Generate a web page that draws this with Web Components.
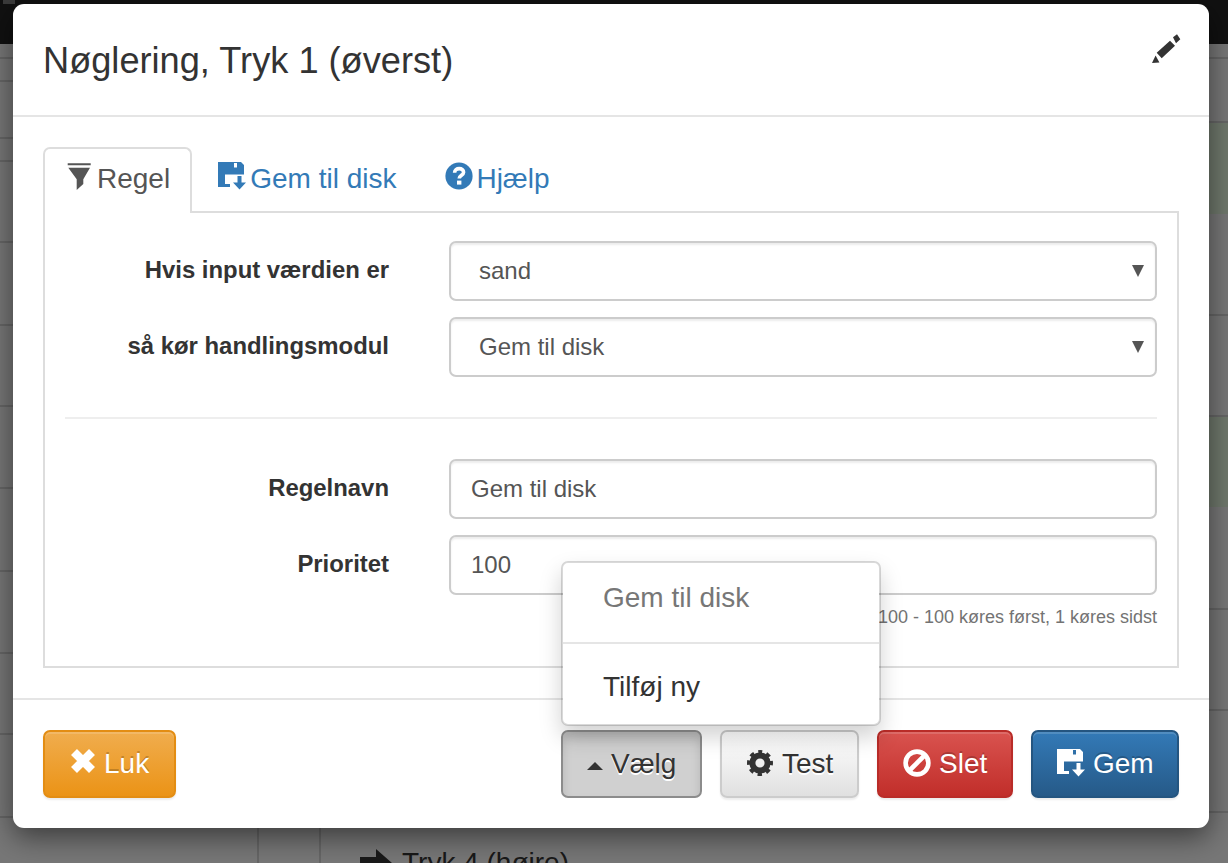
<!DOCTYPE html>
<html lang="da">
<head>
<meta charset="utf-8">
<title>Nøglering</title>
<style>
  html, body { margin: 0; height: 100%; overflow: hidden; }
  body { font-family: "Liberation Sans", Arial, sans-serif; color: #333; background: #eee; }
</style>
</head>
<body>
<page-behind></page-behind>
<rule-modal heading="Nøglering, Tryk 1 (øverst)">
  <ui-tabs slot="tabs"></ui-tabs>
  <rule-field label="Hvis input værdien er" value="sand" kind="select"></rule-field>
  <rule-field label="så kør handlingsmodul" value="Gem til disk" kind="select"></rule-field>
  <hr-line></hr-line>
  <rule-field label="Regelnavn" value="Gem til disk"></rule-field>
  <rule-field label="Prioritet" value="100" help="100 - 100 køres først, 1 køres sidst"></rule-field>
  <ui-btn slot="left" tone="warning" icon="remove" width="133">Luk</ui-btn>
  <pick-menu slot="right"></pick-menu>
  <ui-btn slot="right" tone="default" icon="cog" width="139">Test</ui-btn>
  <ui-btn slot="right" tone="danger" icon="ban" width="136">Slet</ui-btn>
  <ui-btn slot="right" tone="primary" icon="save" width="148">Gem</ui-btn>
</rule-modal>

<script>
const ICONS = {
  filter: `<svg viewBox="0 0 24 30" width="24" height="30"><path d="M.7 2.3h23v2H.7zM1.3 6.7H23L16.3 18.3V23L9.7 29V18.3Z"/></svg>`,
  save: `<svg viewBox="0 0 28 28" width="28" height="28"><path fill-rule="evenodd" d="M0 0H23L26 3V12.5H7V22H12V25H0ZM16 1V5.5H19V1Z"/><path d="M19.5 14H23.5V20.5H28L21.5 27.5L15 20.5H19.5Z"/></svg>`,
  help: `<svg viewBox="0 0 28 28" width="28" height="28"><circle cx="14" cy="14" r="13.6"/><path d="M9.6 10.8C9.6 8 11.8 6.6 14.2 6.6C16.8 6.6 18.6 8.1 18.6 10.3C18.6 13.2 14.2 13.4 14.2 16.6" fill="none" stroke="#fff" stroke-width="3.6"/><rect x="12" y="18.6" width="4.4" height="4" fill="#fff"/></svg>`,
  pencil: `<svg viewBox="0 0 30 30" width="30" height="30"><path d="M1 29L4.6 21.6L8.4 28.6ZM5.7 18.7L19 6.7L24 11.7L10.7 24.3ZM22 3.3L26 .3L29.3 5.3L25 9.3Z"/></svg>`,
  remove: `<svg viewBox="0 0 27 24" width="27" height="24"><path d="M5 3L23 21M23 3L5 21" fill="none" stroke="currentColor" stroke-width="8.4"/></svg>`,
  cog: `<svg viewBox="-1 0 28 26" width="28" height="26"><g fill="none" stroke="currentColor"><circle cx="13" cy="13" r="7.6" stroke-width="6"/><circle cx="13" cy="13" r="11" stroke-width="4" stroke-dasharray="4.32 4.32" stroke-dashoffset="2.16" transform="rotate(-90 13 13)"/></g></svg>`,
  ban: `<svg viewBox="0 0 28 28" width="28" height="28"><g fill="none" stroke="currentColor" stroke-width="4.6"><circle cx="14" cy="14" r="11.4"/><path d="M22 6L6 22"/></g></svg>`,
  caret: `<svg viewBox="0 0 16 8" width="16" height="8"><path d="M8 0L16 8H0Z"/></svg>`,
  arrow: `<svg viewBox="0 0 32 28" width="32" height="28"><path d="M0 8H16V0L32 14L16 28V20H0Z"/></svg>`
};

class UiIcon extends HTMLElement {
  connectedCallback() {
    if (!this.shadowRoot) this.attachShadow({ mode: "open" });
    this.shadowRoot.innerHTML = `
      <style>
        :host { display: inline-flex; align-items: center; justify-content: center; flex: none; }
        svg { display: block; fill: currentColor; overflow: visible; }
      </style>${ICONS[this.getAttribute("name")]}`;
  }
}
customElements.define("ui-icon", UiIcon);

// the page that sits behind the dialog, only its edges show
class PageBehind extends HTMLElement {
  constructor() {
    super();
    this.attachShadow({ mode: "open" });
  }
  row(h, green) {
    return `<div class="row${green ? " ok" : ""}" style="height:${h}px"></div>`;
  }
  connectedCallback() {
    const left = [15, 23, 57, 23, 81, 83, 81, 82, 83, 82, 81, 83].map(h => this.row(h)).join("");
    const right = [[15], [64], [91, 1], [102], [101], [90, 1], [103], [101], [102]].map(r => this.row(r[0], r[1])).join("");
    this.shadowRoot.innerHTML = `
      <style>
        :host { position: absolute; inset: 0; display: flex; flex-direction: column; background: #eee; }
        .nav { height: 44px; background: #222; flex: none; display: flex; }
        .nav i { width: 12px; height: 4px; margin-left: 3px; background: #777; }
        .cols { flex: 1; display: grid; grid-template-columns: 257px 62px 1fr 19px; }
        .col + .col { border-left: 2px solid #ccc; }
        .col:last-child { border-left: 0; }
        .row { border-bottom: 2px solid #ccc; box-sizing: border-box; }
        .ok { background: #dff0d8; border-bottom: 0; }
        .main { display: flex; justify-content: flex-end; flex-direction: column; }
        .tail { display: flex; align-items: center; gap: 10px; padding-left: 39px; margin-bottom: -16px; font-size: 28px; line-height: 32px; color: #333; }
      </style>
      <div class="nav"><i></i></div>
      <div class="cols">
        <div class="col">${left}</div>
        <div class="col"></div>
        <div class="col main"><div class="tail"><ui-icon name="arrow"></ui-icon>Tryk 4 (højre)</div></div>
        <div class="col">${right}</div>
      </div>`;
  }
}
customElements.define("page-behind", PageBehind);

class RuleModal extends HTMLElement {
  constructor() {
    super();
    this.attachShadow({ mode: "open" });
  }
  connectedCallback() {
    this.shadowRoot.innerHTML = `
      <style>
        :host { position: absolute; inset: 0; background: rgba(0,0,0,.5); display: block; }
        .dialog { position: absolute; left: 13px; top: 4px; width: 1196px; height: 824px; background: #fff;
          border-radius: 11px; display: flex; flex-direction: column; box-shadow: 0 9px 28px rgba(0,0,0,.5); color: #333; }
        header { height: 111px; flex: none; box-sizing: content-box; border-bottom: 2px solid #e5e5e5; display: flex; justify-content: space-between; padding: 0 28px 0 30px; }
        h4 { margin: 0; font-size: 36.2px; font-weight: 400; line-height: 114px; }
        header ui-icon { margin-top: 30px; height: 30px; color: #333; }
        .body { flex: 1; padding: 30px 30px 30px 30px; min-height: 0; display: flex; flex-direction: column; border-bottom: 2px solid #e5e5e5; }
        .panel { flex: 1; margin-top: -2px; margin-right: 0; border: 2px solid #ddd; padding: 28px 20px 0; display: flex; flex-direction: column; }
        footer { height: 68px; flex: none; padding: 30px 30px 30px 30px; display: flex; justify-content: space-between; }
        .group { display: flex; gap: 18px; }
      </style>
      <div class="dialog">
        <header><h4>${this.getAttribute("heading")}</h4><ui-icon name="pencil"></ui-icon></header>
        <div class="body">
          <slot name="tabs"></slot>
          <div class="panel"><slot></slot></div>
        </div>
        <footer>
          <div class="group"><slot name="left"></slot></div>
          <div class="group"><slot name="right"></slot></div>
        </footer>
      </div>`;
  }
}
customElements.define("rule-modal", RuleModal);

class UiTabs extends HTMLElement {
  constructor() {
    super();
    this.attachShadow({ mode: "open" });
  }
  connectedCallback() {
    this.shadowRoot.innerHTML = `
      <style>
        :host { display: flex; gap: 4px; position: relative; z-index: 1; font-size: 28px; }
        a { box-sizing: border-box; height: 65px; display: flex; align-items: center; gap: 4px; padding: 0 21px 4px 20px; color: #337ab7; border: 2px solid transparent; border-bottom: 0; }
        a.on { color: #555; background: #fff; border-color: #ddd; border-radius: 7px 7px 0 0; height: 66px; padding: 0 20px 4px 22px; gap: 6px; }
        a ui-icon { margin-top: -6px; }
        a:last-child { gap: 3px; }
      </style>
      <a class="on"><ui-icon name="filter"></ui-icon><span>Regel</span></a>
      <a><ui-icon name="save"></ui-icon><span>Gem til disk</span></a>
      <a><ui-icon name="help"></ui-icon><span>Hjælp</span></a>`;
  }
}
customElements.define("ui-tabs", UiTabs);

class RuleField extends HTMLElement {
  constructor() {
    super();
    this.attachShadow({ mode: "open" });
  }
  connectedCallback() {
    const isSelect = this.getAttribute("kind") === "select";
    const help = this.getAttribute("help");
    this.shadowRoot.innerHTML = `
      <style>
        :host { display: grid; grid-template-columns: 324px 1fr; column-gap: 60px; margin-bottom: 16px; font-size: 23.9px; }
        :host(:last-of-type) { margin-bottom: 0; }
        label { font-weight: 700; text-align: right; line-height: 58px; color: #333; }
        .ctl { box-sizing: border-box; height: 60px; border: 2px solid #ccc; border-radius: 7px; background: #fff; color: #555;
          display: flex; align-items: center; justify-content: space-between; padding: 0 22px 0 ${isSelect ? 28 : 20}px;
          box-shadow: inset 0 2px 2px rgba(0,0,0,.075); font-size: 24px; }
        .arrow { width: 0; height: 0; border: 6px solid transparent; border-top: 12px solid #555; border-bottom: 0; margin-right: -11px; }
        small { display: block; grid-column: 2; text-align: right; font-size: 18px; color: #737373; margin-top: 12px; line-height: 20px; }
      </style>
      <label>${this.getAttribute("label")}</label>
      <div class="ctl"><span>${this.getAttribute("value")}</span>${isSelect ? `<i class="arrow"></i>` : ""}</div>
      ${help ? `<small>${help}</small>` : ""}`;
  }
}
customElements.define("rule-field", RuleField);

class HrLine extends HTMLElement {
  constructor() {
    super();
    this.attachShadow({ mode: "open" }).innerHTML = `
      <style>:host { display: block; height: 2px; background: #eee; margin: 24px 0 40px; }</style>`;
  }
}
customElements.define("hr-line", HrLine);

class UiBtn extends HTMLElement {
  constructor() {
    super();
    this.attachShadow({ mode: "open" });
  }
  connectedCallback() {
    this.style.width = this.getAttribute("width") + "px";
    this.shadowRoot.innerHTML = `
      <style>
        :host { box-sizing: border-box; height: 68px; display: inline-flex; align-items: center; gap: 8px; padding: 0 0 0 24px; border: 2px solid; border-radius: 7px; white-space: nowrap;
          font-size: 28px; box-shadow: inset 0 2px 0 rgba(255,255,255,.15), 0 2px 2px rgba(0,0,0,.075); color: #fff; text-shadow: 0 -2px 0 rgba(0,0,0,.2); }
        :host([tone="warning"]) { background: linear-gradient(#f0ad4e, #eb9316); border-color: #e38d13; }
        :host([tone="danger"]) { background: linear-gradient(#d9534f, #c12e2a); border-color: #b92c28; }
        :host([tone="primary"]) { background: linear-gradient(#337ab7, #265a88); border-color: #245580; }
        :host([tone="default"]) { background: linear-gradient(#fff, #e0e0e0); border-color: #ccc; color: #333; text-shadow: 0 2px 0 #fff; }
        :host([tone="open"]) { background: #d0d0d0; border-color: #8c8c8c; color: #333; text-shadow: 0 2px 0 #fff; box-shadow: inset 0 6px 10px rgba(0,0,0,.125); }
        ui-icon { margin-top: -3px; }
        :host([icon="caret"]) ui-icon { margin-top: 4px; }
        :host([icon="remove"]) ui-icon { margin-top: -6px; }
      </style>
      <ui-icon name="${this.getAttribute("icon")}"></ui-icon><slot></slot>`;
  }
}
customElements.define("ui-btn", UiBtn);

class PickMenu extends HTMLElement {
  constructor() {
    super();
    this.attachShadow({ mode: "open" });
  }
  connectedCallback() {
    this.shadowRoot.innerHTML = `
      <style>
        :host { position: relative; display: block; font-size: 28px; }
        .menu { position: absolute; left: 0; bottom: calc(100% + 4px); width: 320px; box-sizing: border-box; height: 165px; background: #fff;
          border: 2px solid rgba(0,0,0,.15); background-clip: padding-box; border-radius: 7px; box-shadow: 0 11px 22px rgba(0,0,0,.175);
          display: flex; flex-direction: column; }
        .menu div { box-sizing: border-box; padding-left: 40px; display: flex; align-items: center; }
        .head { height: 79px; color: #777; padding-bottom: 10px; }
        .add { height: 80px; padding-top: 6px; }
        .sep { height: 2px; background: #e5e5e5; padding: 0 !important; flex: none; }
      </style>
      <ui-btn tone="open" icon="caret" width="141">Vælg</ui-btn>
      <div class="menu"><div class="head">Gem til disk</div><div class="sep"></div><div class="add">Tilføj ny</div></div>`;
  }
}
customElements.define("pick-menu", PickMenu);
</script>
</body>
</html>
